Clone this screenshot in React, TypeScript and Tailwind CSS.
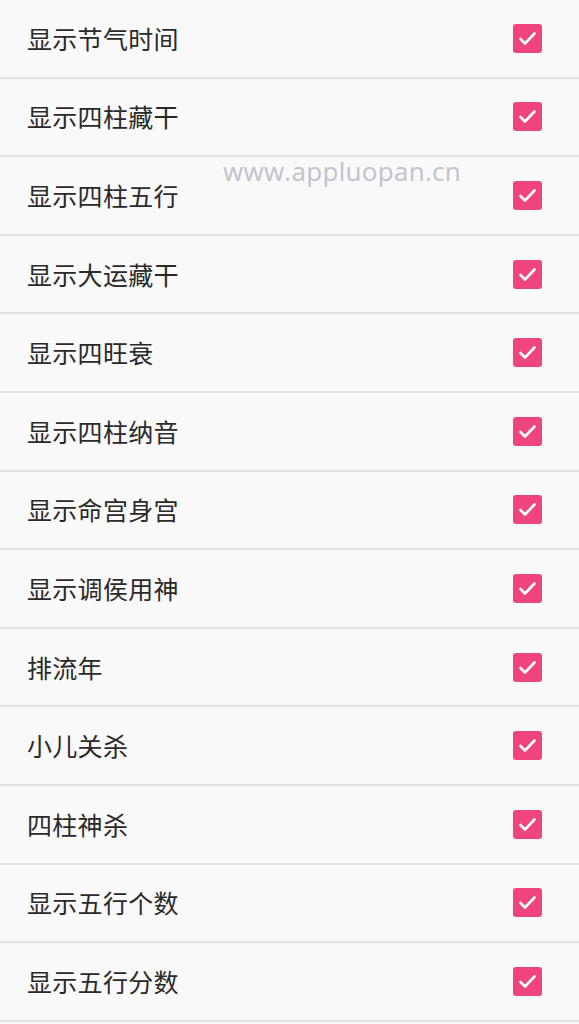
import { useState } from "react";

const ITEMS = [
  "显示节气时间",
  "显示四柱藏干",
  "显示四柱五行",
  "显示大运藏干",
  "显示四旺衰",
  "显示四柱纳音",
  "显示命宫身宫",
  "显示调侯用神",
  "排流年",
  "小儿关杀",
  "四柱神杀",
  "显示五行个数",
  "显示五行分数",
];

function CheckBox({ checked, onToggle }: { checked: boolean; onToggle: () => void }) {
  return (
    <button
      onClick={onToggle}
      className={
        checked
          ? "w-[29px] h-[29px] rounded-[3px] bg-[#f0457c] flex items-center justify-center"
          : "w-[29px] h-[29px] rounded-[3px] border-2 border-[#888] bg-transparent"
      }
    >
      {checked && (
        <svg width="29" height="29" viewBox="0 0 29 29" fill="none">
          <path d="M7.5 15 L12 19.5 L21.5 9.5" stroke="#fff" strokeWidth="2.6" strokeLinecap="round" strokeLinejoin="round" />
        </svg>
      )}
    </button>
  );
}

export default function App() {
  const [checked, setChecked] = useState<boolean[]>(ITEMS.map(() => true));

  const toggle = (i: number) => setChecked((c) => c.map((v, j) => (j === i ? !v : v)));

  return (
    <div className="relative w-[579px] h-[1024px] overflow-hidden bg-[#f9f9f9] font-['Noto_Sans_CJK_SC',sans-serif]">
      {ITEMS.map((label, i) => (
        <div
          key={label}
          className="h-[78.6px] flex items-center justify-between pl-[27px] pr-[37px] border-b-2 border-[#e2e2e2]"
        >
          <span className="text-[25px] tracking-[0.3px] leading-none text-[#2a2a2a]">{label}</span>
          <CheckBox checked={checked[i]} onToggle={() => toggle(i)} />
        </div>
      ))}
      {/* watermark */}
      <div className="absolute left-[223px] top-[152px] text-[26px] tracking-[0.3px] font-medium text-[#c2c2ce] font-['Open_Sans',sans-serif] pointer-events-none">
        www.appluopan.cn
      </div>
    </div>
  );
}
